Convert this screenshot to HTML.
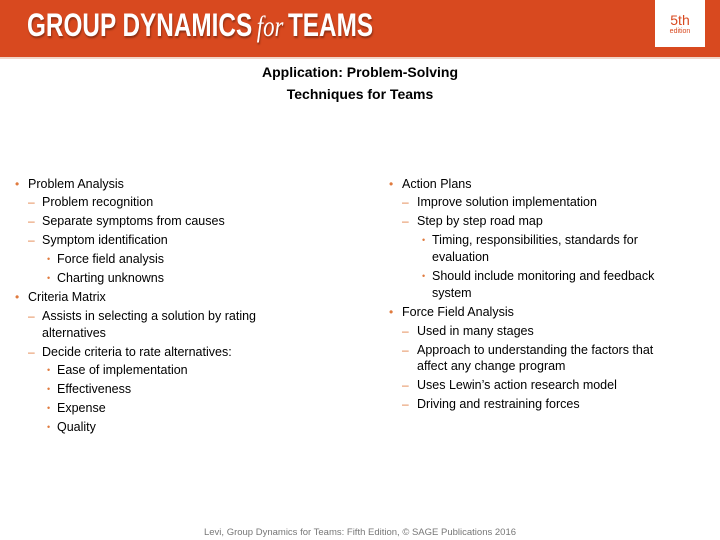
<!DOCTYPE html>
<html><head><meta charset="utf-8"><style>
body{margin:0;width:720px;height:540px;position:relative;background:#fff;font-family:"Liberation Sans",sans-serif;overflow:hidden}
.hd{position:absolute;left:0;top:0;width:720px;height:57px;background:#d8491f;border-bottom:2px solid #f0d5c8}
.logo{position:absolute;left:27px;top:7px;color:#fff;font-weight:bold;font-size:32px;text-shadow:1px 2px 2px rgba(0,0,0,.35);white-space:nowrap;transform:scaleX(0.76);transform-origin:0 0}
.logo i{font-family:"Liberation Serif",serif;font-weight:normal;font-size:30px;margin:0 6px}
.ed{position:absolute;left:655px;top:0;width:50px;height:47px;background:#fff;text-align:center;color:#d8491f}
.t{position:absolute;left:0;width:720px;text-align:center;font-weight:bold;font-size:14px;color:#000}
.l{position:absolute;font-size:12.5px;color:#000;white-space:nowrap;line-height:18px}
.b{position:absolute;color:#e07b3f;font-size:12px;line-height:18px}
.ft{position:absolute;left:0;width:720px;top:527px;text-align:center;font-size:9.5px;color:#777}
</style></head><body>
<div class="hd"></div>
<div class="logo">GROUP DYNAMICS<i>for</i>TEAMS</div>
<div class="ed"><div style="font-size:14px;margin-top:13px;line-height:15px">5th</div><div style="font-size:7px;line-height:8px">edition</div></div>
<div class="t" style="top:64px">Application: Problem-Solving</div>
<div class="t" style="top:86px">Techniques for Teams</div>

<div class="b" style="left:15px;top:175px">•</div><div class="l" style="left:28px;top:175px">Problem Analysis</div>
<div class="b" style="left:28px;top:193px">–</div><div class="l" style="left:42px;top:193px">Problem recognition</div>
<div class="b" style="left:28px;top:212px">–</div><div class="l" style="left:42px;top:212px">Separate symptoms from causes</div>
<div class="b" style="left:28px;top:231px">–</div><div class="l" style="left:42px;top:231px">Symptom identification</div>
<div class="b" style="left:47px;top:250px;font-size:9px">•</div><div class="l" style="left:57px;top:250px">Force field analysis</div>
<div class="b" style="left:47px;top:269px;font-size:9px">•</div><div class="l" style="left:57px;top:269px">Charting unknowns</div>
<div class="b" style="left:15px;top:288px">•</div><div class="l" style="left:28px;top:288px">Criteria Matrix</div>
<div class="b" style="left:28px;top:307px">–</div><div class="l" style="left:42px;top:307px">Assists in selecting a solution by rating</div>
<div class="l" style="left:42px;top:324px">alternatives</div>
<div class="b" style="left:28px;top:343px">–</div><div class="l" style="left:42px;top:343px">Decide criteria to rate alternatives:</div>
<div class="b" style="left:47px;top:361px;font-size:9px">•</div><div class="l" style="left:57px;top:361px">Ease of implementation</div>
<div class="b" style="left:47px;top:380px;font-size:9px">•</div><div class="l" style="left:57px;top:380px">Effectiveness</div>
<div class="b" style="left:47px;top:399px;font-size:9px">•</div><div class="l" style="left:57px;top:399px">Expense</div>
<div class="b" style="left:47px;top:418px;font-size:9px">•</div><div class="l" style="left:57px;top:418px">Quality</div>

<div class="b" style="left:389px;top:175px">•</div><div class="l" style="left:402px;top:175px">Action Plans</div>
<div class="b" style="left:402px;top:193px">–</div><div class="l" style="left:417px;top:193px">Improve solution implementation</div>
<div class="b" style="left:402px;top:212px">–</div><div class="l" style="left:417px;top:212px">Step by step road map</div>
<div class="b" style="left:422px;top:231px;font-size:9px">•</div><div class="l" style="left:432px;top:231px">Timing, responsibilities, standards for</div>
<div class="l" style="left:432px;top:248px">evaluation</div>
<div class="b" style="left:422px;top:267px;font-size:9px">•</div><div class="l" style="left:432px;top:267px">Should include monitoring and feedback</div>
<div class="l" style="left:432px;top:284px">system</div>
<div class="b" style="left:389px;top:303px">•</div><div class="l" style="left:402px;top:303px">Force Field Analysis</div>
<div class="b" style="left:402px;top:322px">–</div><div class="l" style="left:417px;top:322px">Used in many stages</div>
<div class="b" style="left:402px;top:341px">–</div><div class="l" style="left:417px;top:341px">Approach to understanding the factors that</div>
<div class="l" style="left:417px;top:357px">affect any change program</div>
<div class="b" style="left:402px;top:376px">–</div><div class="l" style="left:417px;top:376px">Uses Lewin’s action research model</div>
<div class="b" style="left:402px;top:395px">–</div><div class="l" style="left:417px;top:395px">Driving and restraining forces</div>

<div class="ft">Levi, Group Dynamics for Teams: Fifth Edition, © SAGE Publications 2016</div>
</body></html>
